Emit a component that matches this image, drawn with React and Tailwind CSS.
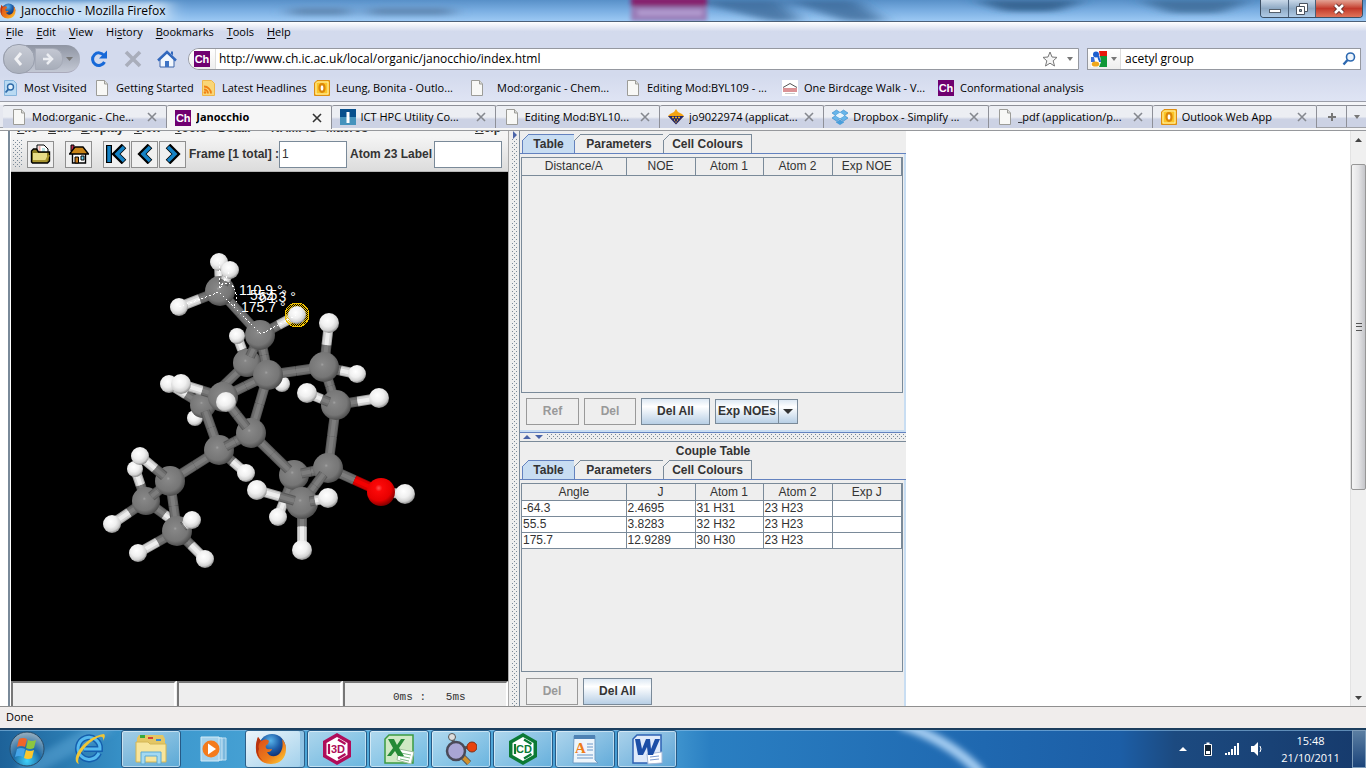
import { useState } from "react"

const menus = ["File", "Edit", "View", "History", "Bookmarks", "Tools", "Help"]
const accessKeys = { File: 0, Edit: 0, View: 0, History: 2, Bookmarks: 0, Tools: 0, Help: 0 }

const bookmarks = [
  { icon: "visited", label: "Most Visited", width: "w-[92px]" },
  { icon: "page", label: "Getting Started", width: "w-[106px]" },
  { icon: "rss", label: "Latest Headlines", width: "w-[114px]" },
  { icon: "outlook", label: "Leung, Bonita - Outlo...", width: "w-[155px]" },
  { icon: "page", label: "Mod:organic - Chem...", width: "w-[156px]", wide: true },
  { icon: "page", label: "Editing Mod:BYL109 - ...", width: "w-[157px]" },
  { icon: "venues", label: "One Birdcage Walk - V...", width: "w-[156px]" },
  { icon: "ch", label: "Conformational analysis", width: "w-[160px]" },
]

const browserTabs = [
  { icon: "page", label: "Mod:organic - Che..." },
  { icon: "ch", label: "Janocchio" },
  { icon: "ict", label: "ICT HPC Utility Co..." },
  { icon: "page", label: "Editing Mod:BYL10..." },
  { icon: "journal", label: "jo9022974 (applicat..." },
  { icon: "dropbox", label: "Dropbox - Simplify ..." },
  { icon: "page", label: "_pdf (application/p..." },
  { icon: "outlook", label: "Outlook Web App" },
]

// x, y, radius, depth (larger is nearer)
const atoms = {
  C1: [220, 291, 15, 6],
  C2: [260, 335, 15, 6],
  C3: [247, 363, 14, 3],
  C4: [268, 375, 15, 7],
  C5: [324, 367, 15, 6],
  C6: [223, 397, 15, 8],
  C7: [203, 405, 13, 2],
  C8: [336, 405, 15, 7],
  C9: [251, 433, 15, 6],
  C10: [219, 450, 15, 4],
  C11: [170, 481, 15, 5],
  C12: [146, 501, 14, 3],
  C13: [177, 531, 15, 6],
  C14: [294, 475, 15, 4],
  C15: [328, 468, 15, 6],
  C16: [302, 503, 16, 8],
  O1: [381, 492, 14, 7],
  H1: [219, 262, 9, 5],
  H2: [230, 270, 9, 9],
  H3: [179, 307, 9, 7],
  H23: [297, 315, 9, 7],
  H5: [329, 323, 10, 7],
  H6: [237, 336, 8, 2],
  H7: [357, 374, 9, 5],
  H8: [282, 384, 8, 1],
  H9: [169, 384, 9, 1],
  H10: [181, 384, 10, 8],
  H11: [226, 402, 10, 12],
  H12: [195, 418, 8, 1],
  H13: [307, 393, 10, 9],
  H14: [379, 398, 10, 8],
  H15: [246, 473, 9, 3],
  H16: [140, 456, 9, 7],
  H17: [135, 469, 8, 2],
  H18: [112, 524, 9, 4],
  H19: [183, 528, 8, 2],
  H20: [192, 520, 9, 9],
  H21: [138, 553, 9, 7],
  H22: [205, 559, 9, 5],
  H24: [257, 490, 10, 10],
  H25: [328, 498, 10, 11],
  H26: [278, 517, 9, 4],
  H27: [302, 550, 10, 8],
  H28: [405, 494, 10, 8],
}

const bonds = [
  ["C1", "C2"], ["C2", "C3"], ["C2", "C4"], ["C4", "C5"], ["C4", "C6"], ["C4", "C9"],
  ["C3", "C7"], ["C7", "C10"], ["C6", "C9"], ["C9", "C10"], ["C9", "C14"], ["C14", "C15"],
  ["C5", "C8"], ["C8", "C15"], ["C15", "C16"], ["C15", "O1"], ["C10", "C11"], ["C11", "C12"],
  ["C11", "C13"], ["C1", "H1"], ["C1", "H2"], ["C1", "H3"], ["C2", "H23"], ["C5", "H5"],
  ["C3", "H6"], ["C5", "H7"], ["C3", "H8"], ["C7", "H9"], ["C6", "H10"], ["C6", "H11"],
  ["C7", "H12"], ["C8", "H13"], ["C8", "H14"], ["C10", "H15"], ["C11", "H16"], ["C12", "H17"],
  ["C12", "H18"], ["C12", "H19"], ["C13", "H20"], ["C13", "H21"], ["C13", "H22"],
  ["C16", "H24"], ["C16", "H25"], ["C14", "H26"], ["C16", "H27"], ["O1", "H28"],
]

const bondShades = {
  C: ["#575757", "#6c6c6c", "#7d7d7d"],
  H: ["#a4a4a4", "#d2d2d2", "#eeeeee"],
  O: ["#a00000", "#d80000", "#f40000"],
}

function HalfBond({ x1, y1, x2, y2, element }) {
  return bondShades[element].map((color, i) => (
    <line key={color} x1={x1} y1={y1} x2={x2} y2={y2} stroke={color} strokeWidth={[10, 8, 4][i]} />
  ))
}

// neighbours at about the same depth hide both ends of their bond,
// otherwise the bond comes out of the face of the farther atom
function placeBond([a, b]) {
  const [x1, y1, r1, z1] = atoms[a]
  const [x2, y2, r2, z2] = atoms[b]
  const flat = Math.abs(z1 - z2) <= 1
  const length = Math.hypot(x2 - x1, y2 - y1)
  const cut1 = !flat && z1 < z2 ? (r1 * 0.5) / length : 0
  const cut2 = !flat && z2 < z1 ? (r2 * 0.5) / length : 0
  const at = (t) => [x1 + (x2 - x1) * t, y1 + (y2 - y1) * t]
  return {
    id: a + b,
    a,
    b,
    start: at(cut1),
    middle: at(0.5),
    end: at(1 - cut2),
    z: flat ? Math.min(z1, z2) - 0.1 : (z1 + z2) / 2,
  }
}

function Molecule() {
  const parts = [
    ...Object.keys(atoms).map((id) => ({ id, z: atoms[id][3] })),
    ...bonds.map(placeBond),
  ].sort((p, q) => p.z - q.z)

  return (
    <svg viewBox="11 172 497 509" className="w-full h-full block" aria-label="Molecule">
      <defs>
        <radialGradient id="atomC" cx="44%" cy="42%" r="60%">
          <stop offset="0" stopColor="#a2a2a2" />
          <stop offset="0.1" stopColor="#868686" />
          <stop offset="0.7" stopColor="#767676" />
          <stop offset="1" stopColor="#494949" />
        </radialGradient>
        <radialGradient id="atomH" cx="42%" cy="36%" r="64%">
          <stop offset="0" stopColor="#ffffff" />
          <stop offset="0.5" stopColor="#f0f0f0" />
          <stop offset="0.8" stopColor="#d2d2d2" />
          <stop offset="1" stopColor="#8c8c8c" />
        </radialGradient>
        <radialGradient id="atomO" cx="42%" cy="36%" r="64%">
          <stop offset="0" stopColor="#ff5050" />
          <stop offset="0.2" stopColor="#fb0808" />
          <stop offset="0.7" stopColor="#e80000" />
          <stop offset="1" stopColor="#860000" />
        </radialGradient>
        <pattern id="halo" width="2" height="2" patternUnits="userSpaceOnUse">
          <rect width="1" height="1" fill="#f2c200" />
          <rect x="1" y="1" width="1" height="1" fill="#f2c200" />
        </pattern>
      </defs>
      {parts.map((p) => {
        if (!p.a) {
          const [x, y, r] = atoms[p.id]
          return (
            <g key={p.id}>
              {p.id === "H23" && (
                <circle cx={x} cy={y} r="12" fill="url(#halo)" stroke="#f2c200" shapeRendering="crispEdges" />
              )}
              <circle cx={x} cy={y} r={r} fill={`url(#atom${p.id[0]})`} />
            </g>
          )
        }
        return (
          <g key={p.id}>
            <HalfBond x1={p.start[0]} y1={p.start[1]} x2={p.middle[0]} y2={p.middle[1]} element={p.a[0]} />
            <HalfBond x1={p.middle[0]} y1={p.middle[1]} x2={p.end[0]} y2={p.end[1]} element={p.b[0]} />
          </g>
        )
      })}
      <g fill="none" stroke="#fff" strokeDasharray="2 2" shapeRendering="crispEdges">
        <path d="M179 307L219 292L261 334L297 315" />
        <path d="M219 262L220 289L230 270" />
        <path d="M221 285q12 -6 15 9q2 8 -3 13" />
      </g>
      <g fill="#fff" fontFamily="'Liberation Sans', Arial, sans-serif" fontSize="14">
        <text x="239" y="295">110.9 °</text>
        <text x="250" y="300">55.5 °</text>
        <text x="259" y="302">64.3 °</text>
        <text x="241" y="312">175.7 °</text>
      </g>
    </svg>
  )
}

function SiteIcon({ name }) {
  const cls = "w-4 h-4 shrink-0"
  if (name === "ch")
    return (
      <span className="w-4 h-4 shrink-0 bg-[#6f0070] text-white text-[11px] leading-4 font-bold text-center font-['Liberation_Sans',Arial,sans-serif]">
        Ch
      </span>
    )
  if (name === "visited")
    return (
      <svg className={cls} viewBox="0 0 16 16">
        <path d="M2.500 .5h9l3 3v12h-12z" fill="#b9daf3" stroke="#86b4dc" />
        <circle cx="8.500" cy="7" r="3" fill="#e2f1fc" stroke="#2f6aa8" strokeWidth="1.400" />
        <path d="M6.300 9.300L3.500 12.500" stroke="#2f6aa8" strokeWidth="1.800" />
      </svg>
    )
  if (name === "rss")
    return (
      <svg className={cls} viewBox="0 0 16 16">
        <path d="M2.500 .5h9l3 3v12h-12z" fill="#f9d678" stroke="#eeb54a" />
        <path d="M4 6.500a7 7 0 0 1 7 7M4 9.500a4 4 0 0 1 4 4" fill="none" stroke="#ef8115" strokeWidth="1.800" />
        <circle cx="5" cy="12.500" r="1.300" fill="#ef8115" />
      </svg>
    )
  if (name === "outlook")
    return (
      <svg className={cls} viewBox="0 0 16 16">
        <path d="M3 .5h12.500v15h-15V3z" fill="#fbc526" stroke="#dd8d12" />
        <path d="M3.500 2h10.500v12H2V3.500z" fill="none" stroke="#fff0b0" />
        <ellipse cx="8" cy="8" rx="2.500" ry="3.800" fill="#fff" stroke="#dc8708" strokeWidth="2.200" />
      </svg>
    )
  if (name === "venues")
    return (
      <svg className={cls} viewBox="0 0 16 16">
        <path d="M0 0h16v16H0z" fill="#fff" />
        <path d="M1 7.500L8 3.500l7 4" fill="none" stroke="#555" />
        <path d="M2 8v4M4 8v4M6 8v4M8 8v4M10 8v4M12 8v4M14 8v4" stroke="#c8575c" strokeWidth="1.300" />
        <path d="M3 13.500h10" stroke="#ccc" />
      </svg>
    )
  if (name === "ict")
    return (
      <svg className={cls} viewBox="0 0 16 16">
        <path d="M0 0h16v8H0z" fill="#07508d" />
        <path d="M0 8h16v8H0z" fill="#4593bd" />
        <path d="M6.500 3h3v11h-3z" fill="#fff" />
      </svg>
    )
  if (name === "journal")
    return (
      <svg className={cls} viewBox="0 0 16 16">
        <path d="M8 0l2 3 4 2 2 2-8 8-8-8 2-2 4-2z" fill="#f5a412" />
        <path d="M0 7h16l-8 8.500z" fill="#23286e" />
        <path d="M4 8.500h2M7 8.500h2M10 8.500h2M6 11h1M9 11h1M7.500 13h1" stroke="#f5b21f" strokeWidth="1.500" />
      </svg>
    )
  if (name === "dropbox")
    return (
      <svg className={cls} viewBox="0 0 16 16">
        <path d="M4.500 1L8 3.500 3.500 6.500 0 4zM11.500 1L16 4l-3.500 2.500L8 3.500zM0 9l3.500-2.500L8 9.500 4.500 12zM16 9l-3.500-2.500L8 9.500l3.500 2.500z" fill="#67b5ea" stroke="#2f86c9" strokeWidth=".6" />
        <path d="M3.500 6.500L8 3.500l4.500 3L8 9.500z" fill="#e4f3fd" />
        <path d="M4 12.500l.5.200L8 10.500l3.500 2.200.5-.200v1L8 16l-4-2.500z" fill="#4a9edb" />
      </svg>
    )
  return (
    <svg className={cls} viewBox="0 0 16 16">
      <path d="M2.500 .5h8l3 3.500v11.500h-11z" fill="#f8f8f6" stroke="#9c9c98" />
      <path d="M10.500 .5v3.500h3" fill="#dcdcd8" stroke="#9c9c98" />
    </svg>
  )
}

function FirefoxIcon({ className }) {
  return (
    <svg className={className} viewBox="0 0 32 32">
      <defs>
        <radialGradient id="globe" cx="45%" cy="25%" r="70%">
          <stop offset="0" stopColor="#58b4ea" />
          <stop offset="0.5" stopColor="#1d5ca8" />
          <stop offset="1" stopColor="#0b1f5c" />
        </radialGradient>
        <linearGradient id="fox" x1="0" y1="0" x2="1" y2="1">
          <stop offset="0" stopColor="#d8481a" />
          <stop offset="0.6" stopColor="#ee7d1a" />
          <stop offset="1" stopColor="#ffd83a" />
        </linearGradient>
      </defs>
      <circle cx="17" cy="14.500" r="13.500" fill="url(#globe)" />
      <path d="M3 4l3 4c3-2 6-2 8 0l-1 3c-2 1-3 2-2 4 1 2 4 1 6 1-1 3-3 3-5 3 2 5 9 6 13 1 3-4 3-9 2-14 3 3 4 7 4 10 0 9-6 15-15 15S1 25 1 16C1 11 2 8 3 4z" fill="url(#fox)" />
      <path d="M3 4l3 4c-2 2-3 5-2 8-2 4 0 9 4 12C-1 23 0 11 3 4z" fill="#b8340f" />
    </svg>
  )
}

function Caret({ up, className = "w-[7px] h-[4px] text-[#777]" }) {
  return (
    <svg className={className} viewBox="0 0 8 4" preserveAspectRatio="none">
      <path d={up ? "M0 4L4 0l4 4z" : "M0 0h8L4 4z"} fill="currentColor" />
    </svg>
  )
}

function Grip({ className }) {
  return (
    <span
      className={`${className} bg-[conic-gradient(from_270deg_at_1px_1px,#7a8a99_90deg,transparent_0),conic-gradient(from_270deg_at_1px_1px,#7a8a99_90deg,transparent_0)] bg-[length:4px_4px] bg-[position:0_0,2px_2px]`}
    ></span>
  )
}

function TitleBar() {
  return (
    <header className="relative h-[22px] shrink-0 flex items-center border-b border-[#4b6078] bg-[#8ab8e6] overflow-hidden">
      <svg className="absolute inset-0 w-full h-full" viewBox="0 0 1366 22" preserveAspectRatio="none">
        <defs>
          <linearGradient id="glass" x1="0" y1="0" x2="0" y2="1">
            <stop offset="0" stopColor="#5890c8" />
            <stop offset="0.5" stopColor="#7aaee2" />
            <stop offset="1" stopColor="#9cc9f4" />
          </linearGradient>
          <filter id="soft" x="-20%" y="-100%" width="140%" height="300%">
            <feGaussianBlur stdDeviation="9 3" />
          </filter>
          <filter id="softer" x="-20%" y="-100%" width="140%" height="300%">
            <feGaussianBlur stdDeviation="2 2" />
          </filter>
        </defs>
        <rect width="1366" height="22" fill="url(#glass)" />
        <g filter="url(#soft)">
          <rect x="-10" y="2" width="180" height="20" fill="#d4e8fa" opacity=".8" />
          <rect x="290" y="8" width="60" height="8" fill="#55799f" opacity=".7" />
          <rect x="368" y="8" width="84" height="8" fill="#55799f" opacity=".7" />
          <path d="M690 0h90l20 22h-30z" fill="#34618f" opacity=".7" />
          <path d="M785 0h70l30 22h-40z" fill="#34618f" opacity=".7" />
          <path d="M975 0h110l-30 12h-50z" fill="#2a5785" opacity=".8" />
          <path d="M1140 0h110l-30 14h-50z" fill="#345f8a" opacity=".7" />
        </g>
        <g filter="url(#softer)">
          <rect x="631" y="-4" width="76" height="11" fill="#86246e" />
          <rect x="631" y="7" width="76" height="15" fill="#9a7db8" />
          <rect x="638" y="11" width="64" height="5" fill="#b59fd2" />
        </g>
      </svg>
      <FirefoxIcon className="relative w-4 h-4" />
      <h1 className="relative flex-1 pl-[5px] text-[12px] leading-4 text-black [text-shadow:0_0_6px_#fff]">Janocchio - Mozilla Firefox</h1>
      <div className="relative self-start flex h-[18px] mr-[3px] border border-t-0 border-[#3c4f64] rounded-b-[4px] overflow-hidden">
        <button aria-label="Minimize" className="w-7 flex items-center justify-center border-r border-[#4a5f78] bg-gradient-to-b from-[#c9d8e8] via-[#8ea9c4] to-[#b0cbe6]">
          <span className="w-3 h-1 mt-1 bg-white border border-[#55606c]"></span>
        </button>
        <button aria-label="Restore" className="w-[27px] flex items-center justify-center border-r border-[#4a5f78] bg-gradient-to-b from-[#c9d8e8] via-[#8ea9c4] to-[#b0cbe6]">
          <svg className="w-3 h-3" viewBox="0 0 12 12">
            <path d="M3.500 .5h8v8h-8z" fill="#fff" stroke="#4a5360" />
            <path d="M.5 3.500h8v8h-8z" fill="#fff" stroke="#4a5360" />
            <path d="M3.500 6.500h2v2h-2z" fill="#8aa" stroke="#4a5360" />
          </svg>
        </button>
        <button aria-label="Close" className="w-[46px] flex items-center justify-center bg-gradient-to-b from-[#e3a294] via-[#c2382a] to-[#e0745a]">
          <svg className="w-3 h-3" viewBox="0 0 12 12">
            <path d="M2 2l8 8M10 2l-8 8" stroke="#5d2a28" strokeWidth="4.500" />
            <path d="M2 2l8 8M10 2l-8 8" stroke="#fff" strokeWidth="2.600" />
          </svg>
        </button>
      </div>
    </header>
  )
}

function MenuBar() {
  return (
    <nav className="h-[21px] shrink-0 flex items-center pl-[6px] gap-[13px] bg-gradient-to-b from-white to-[#d3daed] to-45%">
      {menus.map((m) => {
        const k = accessKeys[m]
        return (
          <button key={m}>
            {m.slice(0, k)}
            <u className="underline-offset-2">{m[k]}</u>
            {m.slice(k + 1)}
          </button>
        )
      })}
    </nav>
  )
}

function NavBar() {
  const [url, setUrl] = useState("http://www.ch.ic.ac.uk/local/organic/janocchio/index.html")
  const [query, setQuery] = useState("acetyl group")

  return (
    <div className="h-[32px] shrink-0 flex items-center pl-[3px] pr-[5px]">
      <div className="w-[77px] h-[28px] shrink-0 flex items-center rounded-full bg-gradient-to-b from-[#8f95a3] to-[#c3c8d4] border-b border-[#aab]">
        <button aria-label="Back" className="w-[32px] h-[30px] shrink-0 rounded-full border border-[#999fad] bg-gradient-to-b from-[#c8ccd6] to-[#a9afbb] flex items-center justify-center">
          <svg className="w-4 h-4" viewBox="0 0 16 16"><path d="M10 2L5 8l5 6" fill="none" stroke="#f0f1f4" strokeWidth="3" /></svg>
        </button>
        <button aria-label="Forward" className="w-[28px] h-[22px] rounded-r-[10px] border border-[#a6abb8] bg-gradient-to-b from-[#c3c7d2] to-[#a8aeba] flex items-center justify-center">
          <svg className="w-4 h-4" viewBox="0 0 16 16"><path d="M6 3l5 5-5 5M2 8h7" fill="none" stroke="#eceef2" strokeWidth="2.500" /></svg>
        </button>
        <button aria-label="Recent pages" className="flex-1 flex justify-center pr-1"><Caret /></button>
      </div>
      <button aria-label="Reload" className="ml-[10px]">
        <svg className="w-[18px] h-[18px]" viewBox="0 0 18 18">
          <path d="M14 5.500A6.300 6.300 0 1 0 14.500 12" fill="none" stroke="#1769d8" strokeWidth="3" />
          <path d="M17 .5v8H9z" fill="#1769d8" />
        </svg>
      </button>
      <button aria-label="Stop" className="ml-[16px]">
        <svg className="w-[18px] h-[18px]" viewBox="0 0 18 18"><path d="M2 2l14 14M16 2L2 16" stroke="#a9aebb" strokeWidth="3.600" /></svg>
      </button>
      <button aria-label="Home" className="ml-[15px]">
        <svg className="w-[20px] h-[18px]" viewBox="0 0 20 18">
          <path d="M3 9v8h14V9l-7-6z" fill="#f2f7fd" stroke="#3c64aa" />
          <path d="M1 10.500L10 2l9 8.500" fill="none" stroke="#3268bd" strokeWidth="2.500" />
          <path d="M8 11h4v6H8z" fill="#3f74c4" />
          <path d="M14 1.500h2v4l-2-2z" fill="#3268bd" />
        </svg>
      </button>
      <div className="ml-[11px] flex-1 h-[22px] flex items-center bg-white border border-[#9598a0] rounded-l-[11px] overflow-hidden">
        <span className="w-[27px] h-full flex items-center pl-[5px] border-r border-[#ddd] bg-gradient-to-b from-white to-[#eee]"><SiteIcon name="ch" /></span>
        <input aria-label="Location" className="flex-1 min-w-0 pl-[3px] text-[12px] outline-none" value={url} onChange={(e) => setUrl(e.target.value)} />
        <button aria-label="Bookmark this page">
          <svg className="w-4 h-4" viewBox="0 0 16 16"><path d="M8 1l2 5 5 .4-3.800 3.400L12.500 15 8 12.200 3.500 15l1.300-5.200L1 6.400 6 6z" fill="#f6f6f6" stroke="#777" /></svg>
        </button>
        <button aria-label="Location history" className="w-[16px] flex justify-center ml-[4px]"><Caret className="w-[6px] h-[4px] text-[#777]" /></button>
      </div>
      <div className="ml-[8px] w-[274px] h-[22px] flex items-center bg-white border border-[#9598a0]">
        <button aria-label="Search engine" className="w-[33px] h-full shrink-0 flex items-center gap-[4px] pl-[3px] border-r border-[#ddd] bg-gradient-to-b from-white to-[#eee]">
          <svg className="w-4 h-4" viewBox="0 0 16 16">
            <path d="M0 0h16v16H0z" fill="#fff" />
            <path d="M8 0h8v6H9z" fill="#e8180c" />
            <path d="M9 5h7v11H8l2-5z" fill="#109838" />
            <path d="M0 6h3l1 5H0z" fill="#3a70d8" />
            <circle cx="5" cy="3.500" r="3" fill="#1c5fd0" />
            <ellipse cx="4.500" cy="13" rx="3.800" ry="2.600" fill="#f0a81c" />
            <path d="M8 5c-2 2 1 3 1 6" stroke="#1c5fd0" strokeWidth="2" fill="none" />
          </svg>
          <Caret className="w-[6px] h-[4px] text-[#777]" />
        </button>
        <input aria-label="Search" className="flex-1 min-w-0 pl-[4px] text-[12px] outline-none" value={query} onChange={(e) => setQuery(e.target.value)} />
        <button aria-label="Go" className="pr-[4px]">
          <svg className="w-[14px] h-[14px]" viewBox="0 0 14 14">
            <circle cx="8.500" cy="5" r="4" fill="#eef5fc" stroke="#2c68b0" strokeWidth="1.600" />
            <path d="M5.500 8L1.500 12.500" stroke="#2c68b0" strokeWidth="2.400" />
          </svg>
        </button>
      </div>
    </div>
  )
}

function BrowserTabs({ active, onSelect }) {
  return (
    <div className="shrink-0 border-t border-[#9a9da8] bg-[#f4f5f8] pt-[3px]">
      <div className="h-[23px] flex pl-[3px] border-b border-[#a0a2a8] bg-[#e6e8f0]">
        {browserTabs.map((tab, i) => (
          <div
            key={tab.label}
            className={`flex-1 min-w-0 flex items-center pl-[8px] pr-[9px] gap-[5px] border-t border-r border-[#8e9098] rounded-t-[2px] ${
              i === active ? "bg-[#f6f6f6] h-[24px]" : "h-[23px] bg-gradient-to-b from-[#eceef3] from-50% to-[#ccd2e4] to-60%"
            }`}
          >
            <SiteIcon name={tab.icon} />
            <button onClick={() => onSelect(i)} className={`flex-1 min-w-0 overflow-hidden whitespace-nowrap text-left ${i === active ? "font-bold" : ""}`}>
              {tab.label}
            </button>
            <button aria-label="Close tab">
              <svg className="w-[10px] h-[10px]" viewBox="0 0 10 10">
                <path d="M1 1l8 8M9 1L1 9" stroke={i === active ? "#333" : "#85888f"} strokeWidth="1.600" />
              </svg>
            </button>
          </div>
        ))}
        <button aria-label="New tab" className="w-[30px] flex items-center justify-center border-t border-r border-[#8e9098] bg-gradient-to-b from-[#eceef3] from-50% to-[#ccd2e4] to-60%">
          <svg className="w-2 h-2" viewBox="0 0 8 8"><path d="M4 0v8M0 4h8" stroke="#777" strokeWidth="2" /></svg>
        </button>
        <button aria-label="List all tabs" className="w-[19px] flex items-center justify-center border-t border-[#8e9098] bg-gradient-to-b from-[#eceef3] from-50% to-[#ccd2e4] to-60%">
          <Caret className="w-[6px] h-[4px] text-[#777]" />
        </button>
      </div>
      <div className="h-[3px] bg-[#f6f6f6] border-b border-[#96989c]"></div>
    </div>
  )
}

const appletMenus = [
  { label: "File", width: "w-[31px]" },
  { label: "Edit", width: "w-[33px]" },
  { label: "Display", width: "w-[53px]" },
  { label: "View", width: "w-[41px]" },
  { label: "Tools", width: "w-[43px]" },
  { label: "Detail", width: "w-[53px]", plain: true },
  { label: "NAMFIS", width: "w-[55px]", plain: true },
  { label: "Macros", width: "w-[50px]", plain: true },
]

function ToolButton({ label, wide, children }) {
  return (
    <button aria-label={label} className={`${wide ? "mr-[11px]" : "mr-[1px]"} w-[27px] h-[27px] shrink-0 flex items-center justify-center border border-[#8f8f8f] bg-[#f0f0f0]`}>
      {children}
    </button>
  )
}

function ViewerPane() {
  const [frame, setFrame] = useState("1")
  const [atomLabel, setAtomLabel] = useState("")

  return (
    <section className="w-[497px] shrink-0 flex flex-col min-h-0 bg-[#eee]">
      <div className="h-[6px] shrink-0 flex items-end pl-[6px] pr-[7px] pb-[2px] overflow-hidden font-bold leading-[14px] bg-[#f4f4f4]">
        {appletMenus.map((m) => (
          <button key={m.label} className={`${m.width} shrink-0 text-left`}>
            {m.plain ? m.label : <><u className="underline-offset-1">{m.label[0]}</u>{m.label.slice(1)}</>}
          </button>
        ))}
        <button className="ml-auto"><u className="underline-offset-1">H</u>elp</button>
      </div>
      <div className="h-[35px] shrink-0 flex items-center pl-[2px] border-b border-[#b8b8b8] bg-gradient-to-b from-[#f4f4f4] to-[#dcdcdc]">
        <Grip className="w-[10px] h-[28px] mr-[4px]" />
        <ToolButton label="Open" wide>
          <svg className="w-[22px] h-[20px]" viewBox="0 0 22 20">
            <path d="M7 8V1h7l4 4v5" fill="#fff" stroke="#000" />
            <path d="M8.500 2h2v7h-2z" fill="#f3b3ac" />
            <path d="M12 4h3v4h-3z" fill="#b9e3e2" />
            <path d="M1.500 18V7l2-2h3l2 3h11v9l-2 2h-15z" fill="#8d7c20" stroke="#000" strokeWidth="1.400" />
            <path d="M3 9h14v7l-2 2H3z" fill="#e8dc88" />
            <path d="M3 17h13l3-6" fill="none" stroke="#a8952f" strokeWidth="2" />
          </svg>
        </ToolButton>
        <ToolButton label="Home" wide>
          <svg className="w-[20px] h-[20px]" viewBox="0 0 20 20">
            <path d="M2 1h3v6H2z" fill="#c02a50" stroke="#000" />
            <path d="M3.500 9h13v10h-13z" fill="#fff" stroke="#000" strokeWidth="1.400" />
            <path d="M.5 10L6 3h8l5.500 7z" fill="#c98418" stroke="#000" strokeWidth="1.400" />
            <path d="M6 13h3.500v6H6z" fill="#c77a1c" stroke="#000" />
            <path d="M12 12h3v4h-3z" fill="#6fd0ee" stroke="#000" />
          </svg>
        </ToolButton>
        <ToolButton label="First frame">
          <svg className="w-[22px] h-[20px]" viewBox="0 0 22 20">
            <path d="M3 1v18" stroke="#000" strokeWidth="6" /><path d="M18 2l-8 8 8 8" fill="none" stroke="#000" strokeWidth="6.500" />
            <path d="M3 2v16" stroke="#1583c6" strokeWidth="3.500" /><path d="M18 3l-7 7 7 7" fill="none" stroke="#1583c6" strokeWidth="3.500" />
          </svg>
        </ToolButton>
        <ToolButton label="Previous frame">
          <svg className="w-[16px] h-[20px]" viewBox="0 0 16 20">
            <path d="M13 2l-8 8 8 8" fill="none" stroke="#000" strokeWidth="6.500" /><path d="M13 3l-7 7 7 7" fill="none" stroke="#1583c6" strokeWidth="3.500" />
          </svg>
        </ToolButton>
        <ToolButton label="Next frame">
          <svg className="w-[16px] h-[20px]" viewBox="0 0 16 20">
            <path d="M3 2l8 8-8 8" fill="none" stroke="#000" strokeWidth="6.500" /><path d="M3 3l7 7-7 7" fill="none" stroke="#1583c6" strokeWidth="3.500" />
          </svg>
        </ToolButton>
        <label htmlFor="frame" className="ml-[2px] font-bold whitespace-nowrap">Frame [1 total] :</label>
        <input id="frame" className="w-[68px] h-[27px] bg-white border border-[#7a8a99] px-[2px] outline-none" value={frame} onChange={(e) => setFrame(e.target.value)} />
        <label htmlFor="atomLabel" className="ml-[3px] mr-[2px] font-bold whitespace-nowrap">Atom 23 Label</label>
        <input id="atomLabel" className="w-[68px] h-[27px] bg-white border border-[#7a8a99] px-[2px] outline-none" value={atomLabel} onChange={(e) => setAtomLabel(e.target.value)} />
      </div>
      <div className="flex-1 min-h-0 bg-black">
        <Molecule />
      </div>
      <div className="h-[25px] shrink-0 grid grid-cols-3 gap-[1px] bg-[#eee]">
        <div className="border-l-2 border-t-2 border-r-2 border-[#777] border-r-white"></div>
        <div className="border-l-2 border-t-2 border-r-2 border-[#777] border-r-white"></div>
        <pre className="border-l-2 border-t-2 border-r-2 border-[#777] border-r-white pl-[48px] pt-[7px] text-[11px] leading-[14px] font-['Liberation_Mono',monospace]">0ms :   5ms</pre>
      </div>
    </section>
  )
}

function SwingTabs() {
  const tabs = [
    { label: "Table", cls: "w-[53px] bg-[#c8ddf2] border-l text-[#333] border-[#6382bf]" },
    { label: "Parameters", cls: "w-[89px] border-[#7a8a99]" },
    { label: "Cell Colours", cls: "w-[88px] border-[#7a8a99]" },
  ]
  return (
    <div className="h-[20px] shrink-0 flex pl-[2px] font-bold border-b border-[#6382bf]">
      {tabs.map((t, i) => (
        <button key={t.label} className={`${t.cls} relative h-[19px] border-t border-r`}>
          <svg className="absolute -left-px -top-px w-[7px] h-[7px]" viewBox="0 0 7 7">
            <path d="M0 0h7L0 7z" fill="#eee" />
            <path d="M0 7L7 0" stroke={i === 0 ? "#6382bf" : "#7a8a99"} />
          </svg>
          {t.label}
        </button>
      ))}
    </div>
  )
}

function SwingTable({ columns, rows }) {
  return (
    <div className="flex-1 min-h-0 border border-[#7a8a99] overflow-hidden">
      <table className="w-full table-fixed border-collapse leading-[15px]">
        <colgroup>
          <col className="w-[104px]" />
          <col className="w-[69px]" />
          <col className="w-[68px]" />
          <col className="w-[69px]" />
          <col />
        </colgroup>
        <thead>
          <tr className="h-[17px]">
            {columns.map((c) => (
              <th key={c} className="p-0 pt-px font-normal text-center border-r border-b border-[#7a8a99]">{c}</th>
            ))}
          </tr>
        </thead>
        <tbody>
          {rows.map((row) => (
            <tr key={row[0]} className="h-[16px] bg-white">
              {row.map((cell, i) => (
                <td key={i} className="p-0 pl-[1px] border-r border-b border-[#7a8a99]">{cell}</td>
              ))}
            </tr>
          ))}
        </tbody>
      </table>
    </div>
  )
}

function SwingButton({ children, disabled, width }) {
  return (
    <button
      disabled={disabled}
      className={`${width} h-[27px] font-bold border ${
        disabled ? "text-[#999] border-[#999] bg-[#eee]" : "border-[#7a8a99] bg-gradient-to-b from-[#dde8f3] via-white via-30% to-[#b8cfe5]"
      }`}
    >
      {children}
    </button>
  )
}

const coupleRows = [
  ["-64.3", "2.4695", "31 H31", "23 H23", ""],
  ["55.5", "3.8283", "32 H32", "23 H23", ""],
  ["175.7", "12.9289", "30 H30", "23 H23", ""],
]

function TablesPane() {
  return (
    <section className="w-[387px] shrink-0 flex flex-col min-h-0 bg-[#eee] border-l border-[#7a8a99]">
      <div className="flex-[300] min-h-0 flex flex-col pt-[3px] border-b border-[#6382bf]">
        <SwingTabs />
        <div className="flex-1 min-h-0 flex flex-col pl-[1px] pr-[1px] pt-[3px] border-r-2 border-b-2 border-[#c8ddf2]">
          <SwingTable columns={["Distance/A", "NOE", "Atom 1", "Atom 2", "Exp NOE"]} rows={[]} />
          <div className="h-[37px] shrink-0 flex items-center gap-[5px] pl-[5px]">
            <SwingButton disabled width="w-[53px]">Ref</SwingButton>
            <SwingButton disabled width="w-[52px]">Del</SwingButton>
            <SwingButton width="w-[69px]">Del All</SwingButton>
            <div className="relative w-[83px] h-[25px]">
              <select aria-label="Experimental data" className="appearance-none w-full h-full pl-[2px] font-bold border border-[#7a8a99] bg-gradient-to-b from-[#dde8f3] via-white via-30% to-[#b8cfe5] outline-none">
                <option>Exp NOEs</option>
              </select>
              <span className="absolute right-[1px] top-[1px] bottom-[1px] w-[19px] flex items-center justify-center border-l border-[#7a8a99] pointer-events-none">
                <Caret className="w-[10px] h-[5px] text-[#333]" />
              </span>
            </div>
          </div>
        </div>
      </div>
      <div className="h-[9px] shrink-0 flex items-center gap-[4px] pl-[3px] bg-[#eee] border-b border-[#7a8a99]">
        <Caret up className="w-[8px] h-[4px] text-[#4a64a8]" />
        <Caret className="w-[8px] h-[4px] text-[#4a64a8]" />
        <Grip className="flex-1 h-[6px]" />
      </div>
      <div className="flex-[266] min-h-0 flex flex-col">
        <h2 className="h-[18px] shrink-0 text-center font-bold leading-[19px]">Couple Table</h2>
        <SwingTabs />
        <div className="flex-1 min-h-0 flex flex-col pl-[1px] pr-[1px] pt-[3px] border-r-2 border-[#c8ddf2]">
          <SwingTable columns={["Angle", "J", "Atom 1", "Atom 2", "Exp J"]} rows={coupleRows} />
          <div className="h-[34px] shrink-0 flex items-center gap-[5px] pl-[5px] pt-[4px]">
            <SwingButton disabled width="w-[52px]">Del</SwingButton>
            <SwingButton width="w-[69px]">Del All</SwingButton>
          </div>
        </div>
      </div>
    </section>
  )
}

function Scrollbar() {
  return (
    <div className="w-[16px] shrink-0 flex flex-col items-center bg-[#f0f0f0] border-l border-[#e3e3e3]">
      <button aria-label="Scroll up" className="h-[33px] shrink-0 pb-[16px] flex items-center"><Caret up className="w-[7px] h-[4px] text-[#444]" /></button>
      <div className="flex-[325] w-full flex items-center justify-center border border-[#979797] rounded-[2px] bg-gradient-to-r from-[#f5f5f5] via-[#e4e4e6] to-[#c4c5c9]">
        <span className="w-[6px] h-[8px] border-y border-[#555] flex items-center"><span className="w-full h-px bg-[#555]"></span></span>
      </div>
      <div className="flex-[200]"></div>
      <button aria-label="Scroll down" className="h-[17px] shrink-0 flex items-center"><Caret className="w-[7px] h-[4px] text-[#444]" /></button>
    </div>
  )
}

const HexLogo = ({ color, text }) => (
  <svg className="w-8 h-8" viewBox="0 0 32 32">
    <path d="M16 0l14 8v16l-14 8-14-8V8z" fill={color} />
    <path d="M16 4l10.500 6v12L16 28 5.500 22V10z" fill="#fff" />
    <path d="M17 6.500l7.500 4.500M17 25.500l7.500-4.500" stroke={color} strokeWidth="2.200" />
    <path d="M8 11v10" stroke={color} strokeWidth="2.200" />
    <text x="17" y="20" textAnchor="middle" fontSize="11" fontWeight="bold" fontFamily="'Liberation Sans', sans-serif" fill={color}>{text}</text>
  </svg>
)

const taskItems = [
  {
    name: "Internet Explorer",
    icon: (
      <svg className="w-9 h-9" viewBox="0 0 36 36">
        <path d="M28 22a11 11 0 1 1 1-4H13" fill="none" stroke="#155fae" strokeWidth="6" />
        <path d="M28 22a11 11 0 1 1 1-4H13" fill="none" stroke="#55b9ee" strokeWidth="3" />
        <path d="M8 33C-2 30 12 6 33 3c2 2 0 5-1 7 1-5-2-5-6-3C14 13 4 28 8 33z" fill="#f0c637" />
      </svg>
    ),
  },
  {
    name: "Windows Explorer",
    open: true,
    icon: (
      <svg className="w-8 h-8" viewBox="0 0 32 32">
        <path d="M2 5l2-3h24l2 4v22H2z" fill="#e3c664" />
        <path d="M5 2h5v3H5z" fill="#38a83c" /><path d="M13 4h5v2h-5z" fill="#d64235" /><path d="M21 6h5v2h-5z" fill="#3b8cd8" />
        <path d="M1 9h12l2 2h16v18H1z" fill="#f7e59c" stroke="#d3b654" />
        <path d="M6 31V19h20v12h-4v-8H10v8z" fill="#a3d9f2" stroke="#5da9d3" />
      </svg>
    ),
  },
  {
    name: "Windows Media Player",
    icon: (
      <svg className="w-8 h-8" viewBox="0 0 32 32">
        <path d="M12 5h17v22H12z" fill="#7db9de" stroke="#bfe0f2" />
        <path d="M8 5h17v22H8z" fill="#91c6e6" stroke="#c9e6f5" />
        <path d="M4 4h18v24H4z" fill="#a5d2ec" stroke="#d3ebf7" />
        <circle cx="14" cy="16" r="8.500" fill="#f47b1c" />
        <path d="M11 10.500l8 5.500-8 5.500z" fill="#fff" />
      </svg>
    ),
  },
  { name: "Firefox", open: true, active: true, icon: <FirefoxIcon className="w-8 h-8" /> },
  { name: "I3D", open: true, icon: <HexLogo color="#b00c5a" text="3D" /> },
  {
    name: "Excel",
    open: true,
    icon: (
      <svg className="w-8 h-8" viewBox="0 0 32 32">
        <path d="M6 2h24v28H2V6z" fill="#cfe9c4" stroke="#3c9a40" strokeWidth="1.500" />
        <path d="M16 16l15 3-3 12-14-4z" fill="#fff" stroke="#9dbf9a" />
        <path d="M18 20l10 2M17 23l10 2M17 26l9 2" stroke="#7fb987" />
        <path d="M5 6h6l3 6 4-6h4l-6 9 5 8h-6l-3-5-4 5H4l6-8z" fill="#258a36" />
      </svg>
    ),
  },
  {
    name: "Molecule viewer",
    open: true,
    icon: (
      <svg className="w-8 h-8" viewBox="0 0 32 32">
        <path d="M7 4l4 13L28 13M14 20l9 10" stroke="#555" strokeWidth="3" fill="none" />
        <path d="M18 24l6 6" stroke="#555" strokeWidth="6" />
        <path d="M18 24l6 6" stroke="#d0902c" strokeWidth="4" />
        <circle cx="11" cy="18" r="9" fill="#a9a6d4" stroke="#4a4a58" strokeWidth="2.500" />
        <circle cx="7" cy="4" r="3.500" fill="#ddd" stroke="#555" />
        <circle cx="27" cy="14" r="5" fill="#e8420c" stroke="#803018" />
      </svg>
    ),
  },
  { name: "ICD", open: true, icon: <HexLogo color="#0b7a35" text="CD" /> },
  {
    name: "WordPad",
    open: true,
    icon: (
      <svg className="w-8 h-8" viewBox="0 0 32 32">
        <path d="M5 3h21v24l3 3H4z" fill="#eef5fb" stroke="#6f9cc4" />
        <path d="M5 2h21v4H5z" fill="#4e82b4" />
        <text x="6" y="20" fontSize="15" fontWeight="bold" fontFamily="'Liberation Serif', serif" fill="#ee7c1a">A</text>
        <path d="M18 11h6M18 14h6M18 17h6M8 22h16M8 25h16" stroke="#6b97c8" />
      </svg>
    ),
  },
  {
    name: "Word",
    open: true,
    icon: (
      <svg className="w-8 h-8" viewBox="0 0 32 32">
        <path d="M6 2h24v28H2V6z" fill="#dfeafa" stroke="#2e62b4" strokeWidth="1.500" />
        <path d="M16 21l15-2v11l-14 1z" fill="#fff" stroke="#a5b9d8" />
        <path d="M19 24l9-1M19 27l9-1" stroke="#7c9bd0" />
        <path d="M4 6h5l2 10 4-10h4l1 10 4-10h5l-7 16h-5l-1-8-4 8H7z" fill="#1c4ea6" />
      </svg>
    ),
  },
]

function Taskbar() {
  return (
    <footer className="relative h-[40px] shrink-0 flex items-stretch border-t-2 border-[#1c3e5e] bg-[#2a80c4] text-white overflow-hidden">
      <svg className="absolute inset-0 w-full h-full" viewBox="0 0 1366 38" preserveAspectRatio="none">
        <defs>
          <linearGradient id="bar" x1="0" y1="0" x2="1" y2="0">
            <stop offset="0" stopColor="#1d6299" />
            <stop offset="0.1" stopColor="#3a96cc" />
            <stop offset="0.3" stopColor="#55aedd" />
            <stop offset="0.49" stopColor="#4297d0" />
            <stop offset="0.52" stopColor="#2a7fc2" />
            <stop offset="0.72" stopColor="#1f68b0" />
            <stop offset="0.82" stopColor="#1c5ea6" />
            <stop offset="0.86" stopColor="#1c4a80" />
            <stop offset="1" stopColor="#163a6c" />
          </linearGradient>
          <filter id="streak"><feGaussianBlur stdDeviation="3" /></filter>
        </defs>
        <rect width="1366" height="38" fill="url(#bar)" />
        <path d="M900 -6Q950 10 982 44" fill="none" stroke="#a5cdf2" strokeWidth="10" filter="url(#streak)" />
        <path d="M20 44L110 -6" stroke="#5fa9d8" strokeWidth="16" opacity=".5" filter="url(#streak)" />
        <rect width="1366" height="1" fill="#8dc0e6" opacity=".6" />
      </svg>
      <button aria-label="Start" className="relative w-[59px] flex items-center justify-center pr-[5px]">
        <svg className="w-9 h-9" viewBox="0 0 36 36">
          <defs>
            <radialGradient id="orb" cx="50%" cy="85%" r="80%">
              <stop offset="0" stopColor="#3fd2fa" />
              <stop offset="0.5" stopColor="#1d6ba6" />
              <stop offset="1" stopColor="#8fa9bc" />
            </radialGradient>
          </defs>
          <circle cx="18" cy="18" r="17" fill="url(#orb)" stroke="#274b68" />
          <path d="M10 8q4-2 8 0l-2 8q-4-2-8 0z" fill="#f0652a" />
          <path d="M19 9q4 2 8 0l-2 8q-4 2-8 0z" fill="#8cc63e" />
          <path d="M8 18q4-2 8 0l-2 8q-4-2-8 0z" fill="#46a5e8" />
          <path d="M17 19q4 2 8 0l-2 8q-4 2-8 0z" fill="#fcc72c" />
        </svg>
      </button>
      <div className="relative flex gap-[2px]">
        {taskItems.map((item) => (
          <button
            key={item.name}
            aria-label={item.name}
            className={`w-[60px] flex items-center justify-center rounded-[3px] border ${
              item.active
                ? "border-[#2d5f88] bg-gradient-to-br from-white/90 to-[#b5daf0]/80 pr-[8px] shadow-[inset_-4px_0_0_#8fc3e4]"
                : item.open
                ? "border-[#265a86] bg-gradient-to-br from-white/55 to-white/15 shadow-[inset_0_0_0_1px_rgba(255,255,255,0.5)]"
                : "border-transparent"
            }`}
          >
            {item.icon}
          </button>
        ))}
      </div>
      <div className="relative ml-auto flex items-center">
        <button aria-label="Show hidden icons"><Caret up className="w-[8px] h-[4px] text-white" /></button>
        <svg className="ml-[16px] w-[10px] h-[15px]" viewBox="0 0 10 15">
          <path d="M1.500 2.500h7v11h-7z" fill="#123" stroke="#fff" /><path d="M3.500 .5h3v2h-3zM3 9h4v3H3z" fill="#fff" />
        </svg>
        <svg className="ml-[12px] w-[15px] h-[12px]" viewBox="0 0 15 12"><path d="M0 10h2v2H0zM3 9h2v3H3zM6 6h2v6H6zM9 3h2v9H9zM12 0h2v12h-2z" fill="#fff" /></svg>
        <svg className="ml-[11px] w-[13px] h-[14px]" viewBox="0 0 13 14">
          <path d="M0 4h3l4-4v14L3 10H0z" fill="#fff" /><path d="M9 4q2 3 0 6" fill="none" stroke="#fff" />
        </svg>
        <div className="w-[88px] pl-[5px] text-center text-[11px] leading-[17px]">
          <div>15:48</div>
          <div>21/10/2011</div>
        </div>
        <button aria-label="Show desktop" className="self-stretch w-[14px] border border-[#7d9cba] bg-gradient-to-b from-[#5b7ea2] to-[#1b447a]"></button>
      </div>
    </footer>
  )
}

const App = () => {
  const [activeTab, setActiveTab] = useState(1)

  return (
    <div className="h-screen flex flex-col overflow-hidden bg-[#d3daed] text-[11px] text-black font-['Open_Sans','Noto_Sans',sans-serif]">
      <TitleBar />
      <MenuBar />
      <NavBar />
      <div className="h-[26px] shrink-0 flex items-center pl-[2px] bg-gradient-to-b from-[#d3daed] to-[#dfe4f4]">
        {bookmarks.map((b) => (
          <a key={b.label} href="#" className={`${b.width} shrink-0 flex items-center whitespace-nowrap ${b.wide ? "gap-[12px]" : "gap-[6px]"}`}>
            <SiteIcon name={b.icon} />
            {b.label}
          </a>
        ))}
      </div>
      <BrowserTabs active={activeTab} onSelect={setActiveTab} />
      <main className="flex-1 min-h-0 flex bg-white overflow-hidden">
        <div className="flex pl-[8px] min-h-0 text-[12px] text-[#333] font-['Liberation_Sans',Arial,sans-serif]">
          <div className="w-[3px] border-l-2 border-[#7a8a99]"></div>
          <ViewerPane />
          <div className="w-[11px] flex flex-col bg-[#eee] border-l border-[#aaa]">
            <svg className="w-[4px] h-[8px] ml-[4px]" viewBox="0 0 4 8"><path d="M0 0l4 4-4 4z" fill="#4a64a8" /></svg>
            <Grip className="flex-1 ml-[3px] w-[6px]" />
          </div>
          <TablesPane />
        </div>
        <div className="flex-1"></div>
        <Scrollbar />
      </main>
      <div className="h-[22px] shrink-0 flex items-center pl-[6px] border-t border-[#8f8f8f] bg-[#f0edec]">Done</div>
      <Taskbar />
    </div>
  )
}

export default App
